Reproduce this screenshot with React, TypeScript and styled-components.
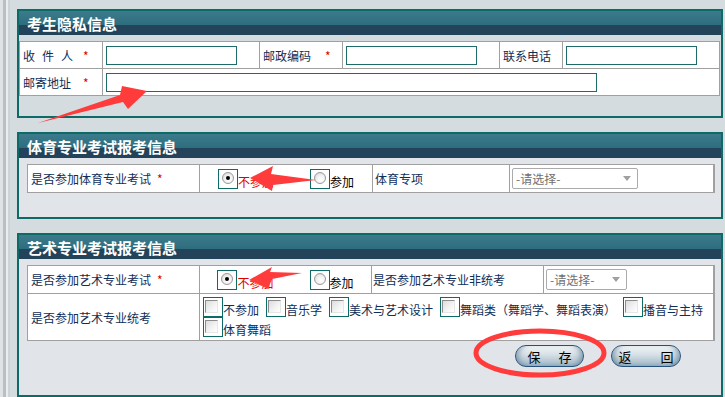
import styled, { createGlobalStyle } from "styled-components";

const GlobalStyle = createGlobalStyle`
  html, body {
    margin: 0;
    padding: 0;
    background: #d5dce0;
  }
  body {
    font-family: "Noto Sans CJK SC", "Liberation Sans", sans-serif;
    font-size: 12px;
  }
`;

const CELL_TEXT = "#0f2e58";
const TEAL = "#0e6a66";

function App() {
  return (
    <Page>
      <GlobalStyle />
      <SideStrip />
      <Main>
        <Panel $body="#d5dce0" $bottom={20}>
          <Header>
            <Title>考生隐私信息</Title>
          </Header>
          <Grid $cols="82px 156px 82px 156px 62px 156px" $rows="26px 26px">
            <Label>
              <Spaced>收件人</Spaced>
              <Star $gap={3}>*</Star>
            </Label>
            <Cell>
              <TextBox $w={131} />
            </Cell>
            <Label>
              邮政编码<Star $gap={14}>*</Star>
            </Label>
            <Cell>
              <TextBox $w={131} />
            </Cell>
            <Label>联系电话</Label>
            <Cell>
              <TextBox $w={131} />
            </Cell>
            <Label>
              邮寄地址<Star $gap={12}>*</Star>
            </Label>
            <Cell $span={5}>
              <TextBox $w={491} />
            </Cell>
          </Grid>
        </Panel>

        <Panel $body="#e1e5e9" $bottom={24}>
          <Header>
            <Title>体育专业考试报考信息</Title>
          </Header>
          <Grid $cols="171px 172px 136px 203px" $rows="27px" $inset>
            <Label>
              是否参加体育专业考试<Star $gap={6}>*</Star>
            </Label>
            <Cell $center>
              <RadioPair />
            </Cell>
            <Label $pad={2}>体育专项</Label>
            <Cell $pad={2}>
              <FakeSelect $w={126} />
            </Cell>
          </Grid>
        </Panel>

        <Panel $body="#e1e5e9" $bottom={28}>
          <Header>
            <Title>艺术专业考试报考信息</Title>
          </Header>
          <Grid $cols="171px 171px 171px 169px" $rows="27px 46px" $inset>
            <Label>
              是否参加艺术专业考试<Star $gap={6}>*</Star>
            </Label>
            <Cell $center>
              <RadioPair />
            </Cell>
            <Label $pad={1}>是否参加艺术专业非统考</Label>
            <Cell $pad={2}>
              <FakeSelect $w={81} />
            </Cell>
            <Label>是否参加艺术专业统考</Label>
            <Cell $span={3} $top>
              <CheckList>
                {["不参加", "音乐学", "美术与艺术设计", "舞蹈类（舞蹈学、舞蹈表演）", "播音与主持", "体育舞蹈"].map(
                  (t) => (
                    <CheckItem key={t}>
                      <Frame>
                        <CheckSquare />
                      </Frame>
                      <span>{t}</span>
                    </CheckItem>
                  )
                )}
              </CheckList>
            </Cell>
          </Grid>
          <ButtonRow>
            <PillButton $w={69} $gap={18}>
              <span>保</span>
              <span>存</span>
            </PillButton>
            <PillButton $w={70} $gap={29}>
              <span>返</span>
              <span>回</span>
            </PillButton>
          </ButtonRow>
        </Panel>
      </Main>

      <Marks viewBox="0 0 725 397" width={725} height={397}>
        <polygon points="38,123 120,95 122,86 147,91 128,109 123,102" fill="#ff3b3b" />
        <polygon points="250,178 273,166 271,174 316,180 273,185 272,191" fill="#ff3b3b" />
        <polygon points="249,280 272,267 270,272 302,273 272,279 268,289" fill="#ff3b3b" />
        <ellipse cx="540" cy="353" rx="64" ry="22" fill="none" stroke="#ff3b3b" strokeWidth="5" />
      </Marks>
    </Page>
  );
}

function RadioPair() {
  return (
    <RadioGroup>
      <Option>
        <Frame>
          <RadioDot $checked />
        </Frame>
        <OptText $color="#e00000">不参加</OptText>
      </Option>
      <Option>
        <Frame>
          <RadioDot />
        </Frame>
        <OptText $color="#000">参加</OptText>
      </Option>
    </RadioGroup>
  );
}

function FakeSelect({ $w }: { $w: number }) {
  return (
    <SelectBox $w={$w}>
      <span>-请选择-</span>
      <svg width="8" height="5" viewBox="0 0 8 5">
        <polygon points="0,0 8,0 4,5" fill="#a0a0a0" />
      </svg>
    </SelectBox>
  );
}

const Page = styled.div`
  position: relative;
  display: flex;
  width: 725px;
  height: 397px;
  overflow: hidden;
`;

const SideStrip = styled.div`
  width: 10px;
  flex: none;
  background: linear-gradient(
    to right,
    #dfe3e5 0,
    #dfe3e5 3px,
    #b9bfc3 3px,
    #b9bfc3 6px,
    #eaedef 6px,
    #eaedef 8px,
    #cdd3d6 8px
  );
`;

const Main = styled.div`
  flex: 1;
  display: flex;
  flex-direction: column;
  gap: 14px;
  padding: 9px 3px 0 7px;
`;

const Panel = styled.section<{ $body: string; $bottom: number }>`
  border: 2px solid ${TEAL};
  background: ${(p) => p.$body};
  padding-bottom: ${(p) => p.$bottom}px;
  flex: none;
`;

const Header = styled.div`
  height: 24px;
  display: flex;
  align-items: center;
  padding-left: 8px;
  margin-bottom: 6px;
  background: linear-gradient(
    to bottom,
    #3b7b8b 0,
    #2e6d7e 14px,
    #22435a 14px,
    #22435a 100%
  );
`;

const Title = styled.h2`
  margin: 0;
  color: #fff;
  font-size: 15px;
  font-weight: 700;
  line-height: 1;
`;

const Grid = styled.div<{ $cols: string; $rows: string; $inset?: boolean }>`
  display: grid;
  grid-template-columns: ${(p) => p.$cols};
  grid-template-rows: ${(p) => p.$rows};
  gap: 1px;
  padding: 1px;
  background: #a0a0a0;
  margin: ${(p) => (p.$inset ? "0 6px 0 8px" : "0 1px 0 0")};
`;

const Cell = styled.div<{ $span?: number; $center?: boolean; $top?: boolean; $pad?: number }>`
  background: #fff;
  display: flex;
  align-items: ${(p) => (p.$top ? "flex-start" : "center")};
  justify-content: ${(p) => (p.$center ? "center" : "flex-start")};
  padding-left: ${(p) => (p.$center ? 0 : p.$pad ?? 3)}px;
  padding-top: ${(p) => (p.$top ? 3 : 0)}px;
  grid-column: ${(p) => (p.$span ? `span ${p.$span}` : "auto")};
  color: ${CELL_TEXT};
  min-width: 0;
`;

const Label = styled.div<{ $pad?: number }>`
  background: #fff;
  display: flex;
  align-items: center;
  padding-left: ${(p) => p.$pad ?? 3}px;
  color: ${CELL_TEXT};
  font-size: 12px;
  white-space: nowrap;
`;

const Spaced = styled.span`
  letter-spacing: 7px;
`;

const Star = styled.span<{ $gap: number }>`
  color: #e00000;
  margin-left: ${(p) => p.$gap}px;
  font-size: 12px;
`;

const TextBox = styled.input.attrs({ type: "text" })<{ $w: number }>`
  box-sizing: border-box;
  width: ${(p) => p.$w}px;
  height: 19px;
  border: 1px solid #1d6c6a;
  background: #fff;
  padding: 0 2px;
  margin: 0;
  outline: none;
`;

const RadioGroup = styled.div`
  display: inline-flex;
  align-items: flex-end;
  gap: 36px;
  margin-top: 1px;
`;

const Option = styled.label`
  display: inline-flex;
  align-items: flex-end;
`;

const OptText = styled.span<{ $color: string }>`
  color: ${(p) => p.$color};
  font-size: 12px;
  line-height: 13px;
  margin-bottom: 1px;
`;

const Frame = styled.span`
  box-sizing: border-box;
  width: 20px;
  height: 20px;
  border: 1px solid ${TEAL};
  display: inline-flex;
  align-items: flex-start;
  justify-content: flex-start;
  padding: 2px 0 0 3px;
  flex: none;
`;

const RadioDot = styled.span<{ $checked?: boolean }>`
  box-sizing: border-box;
  width: 12px;
  height: 12px;
  border-radius: 50%;
  border: 1px solid #9a9a9a;
  background: radial-gradient(circle at 60% 65%, #ffffff 0, #f2f2f2 45%, #cfcfcf 100%);
  position: relative;
  &::after {
    content: "";
    display: ${(p) => (p.$checked ? "block" : "none")};
    position: absolute;
    left: 3px;
    top: 3px;
    width: 4px;
    height: 4px;
    border-radius: 50%;
    background: #000;
  }
`;

const CheckSquare = styled.span`
  box-sizing: border-box;
  width: 13px;
  height: 13px;
  margin-left: -2px;
  border: 1px solid #8c8c8c;
  border-right-color: #e6e6e6;
  border-bottom-color: #e6e6e6;
  background: linear-gradient(135deg, #dcdcdc 0, #f4f4f4 60%, #ffffff 100%);
`;

const CheckList = styled.div`
  display: flex;
  flex-wrap: wrap;
  column-gap: 7px;
  row-gap: 0;
  width: 100%;
`;

const CheckItem = styled.label`
  display: inline-flex;
  align-items: flex-end;
  height: 20px;
  span:last-child {
    line-height: 14px;
    font-size: 12px;
    color: ${CELL_TEXT};
    white-space: nowrap;
  }
`;

const SelectBox = styled.div<{ $w: number }>`
  box-sizing: border-box;
  width: ${(p) => p.$w}px;
  height: 21px;
  border: 1px solid #ababab;
  border-radius: 2px;
  background: #fff;
  display: flex;
  align-items: center;
  justify-content: space-between;
  padding: 0 6px 0 3px;
  color: #6f6f6f;
  font-size: 12px;
`;

const ButtonRow = styled.div`
  display: flex;
  justify-content: flex-end;
  gap: 27px;
  padding-right: 40px;
  margin-top: 4px;
  height: 22px;
`;

const PillButton = styled.button<{ $w: number; $gap: number }>`
  box-sizing: border-box;
  width: ${(p) => p.$w}px;
  height: 22px;
  border: 1px solid #25527c;
  border-radius: 11px;
  padding: 0;
  display: flex;
  align-items: center;
  justify-content: center;
  gap: ${(p) => p.$gap}px;
  font-family: "Noto Sans CJK SC", sans-serif;
  font-size: 13px;
  color: #000;
  background: linear-gradient(to bottom, #f1f4f6 0%, #d9e2e8 40%, #b7c9d4 75%, #96b0c1 100%);
  box-shadow: inset 7px 0 6px -5px rgba(45, 85, 115, 0.55),
    inset -7px 0 6px -5px rgba(45, 85, 115, 0.55);
`;

const Marks = styled.svg`
  position: absolute;
  left: 0;
  top: 0;
  pointer-events: none;
`;

export default App;
